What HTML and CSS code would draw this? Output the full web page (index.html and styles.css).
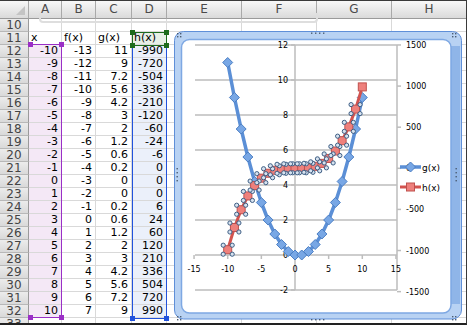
FILE: index.html
```html
<!DOCTYPE html>
<html lang="en">
<head>
  <meta charset="UTF-8">
  <title>Sheet1</title>
  <link rel="stylesheet" href="styles.css">
</head>
<body>
  <div class="window">
    <div class="sheet" id="sheet">
      <div class="ch corner"></div>
      <div class="ch">A</div>
      <div class="ch">B</div>
      <div class="ch">C</div>
      <div class="ch">D</div>
      <div class="ch">E</div>
      <div class="ch">F</div>
      <div class="ch">G</div>
      <div class="ch">H</div>
    </div>

    <div class="old-shape"></div>

    <div class="sel sel-a">
      <i class="knob tl"></i><i class="knob tr"></i><i class="knob bl"></i><i class="knob br"></i>
    </div>
    <div class="sel sel-d">
      <i class="knob tl"></i><i class="knob tr"></i><i class="knob bl"></i><i class="knob br"></i>
    </div>
    <div class="sel sel-h">
      <i class="knob tl"></i><i class="knob tr"></i><i class="knob bl"></i><i class="knob br"></i>
    </div>

    <svg class="chart" id="chart" width="289" height="291" viewBox="174 31 289 291">
      <rect class="frame" x="174.5" y="31.5" width="287" height="287.5" rx="9"/>
      <rect class="frame-side" x="451" y="46" width="9" height="258"/>
      <rect class="plot" x="181.5" y="39.5" width="269.5" height="273.5" rx="8"/>
      <g id="grid"></g>
      <g id="series"></g>
      <g id="legend"></g>
      <g id="dots"></g>
    </svg>
  </div>

  <script>
    const xs = [];
    for (let x = -10; x <= 10; x++) xs.push(x);
    const g = [11, 9, 7.2, 5.6, 4.2, 3, 2, 1.2, 0.6, 0.2, 0, 0, 0.2, 0.6, 1.2, 2, 3, 4.2, 5.6, 7.2, 9];
    const h = xs.map(x => x * x * x - x);

    // spreadsheet rows 10..33
    const sheet = document.getElementById("sheet");
    function addRow(num, cells) {
      let html = `<div class="rh">${num}</div>`;
      const cls = ["ca", "", "", "cd"];
      for (let i = 0; i < 8; i++) {
        let c = "c";
        if (cells && i < 4) {
          c += " " + cls[i];
          if (typeof cells[i] === "string") c += " t";
        }
        if (num === 11 && i === 3) c = "c t cg";
        if (num === 11 && i === 0) c = "c t";
        const txt = cells && i < 4 ? cells[i] : "";
        html += `<div class="${c}">${txt}</div>`;
      }
      sheet.insertAdjacentHTML("beforeend", html);
    }
    addRow(10, null);
    addRow(11, ["x", "f(x)", "g(x)", "h(x)"]);
    xs.forEach((x, i) => addRow(12 + i, [x, x - 3, g[i], h[i]]));
    addRow(33, null);

    // chart
    const NS = "http://www.w3.org/2000/svg";
    function el(parent, tag, attrs, text) {
      const e = document.createElementNS(NS, tag);
      for (const k in attrs) e.setAttribute(k, attrs[k]);
      if (text !== undefined) e.textContent = text;
      document.getElementById(parent).appendChild(e);
      return e;
    }
    const px = x => 295 + x * 6.73;
    const py = v => 255 - v * 17.5;
    const py2 = v => 168.3 - v * 0.08222;

    for (let v = 12; v >= -2; v -= 2) {
      el("grid", "line", { x1: 195, x2: 397, y1: py(v), y2: py(v), class: "gl" });
      el("grid", "line", { x1: 291, x2: 295, y1: py(v), y2: py(v), class: "gl" });
      el("grid", "text", { x: 288, y: py(v) + 3, class: "lbl", "text-anchor": "end" }, v);
    }
    el("grid", "line", { x1: 295, x2: 295, y1: py(12), y2: py(-2), class: "gl" });
    el("grid", "line", { x1: 397, x2: 397, y1: py(12), y2: py(-2), class: "gl" });
    for (let v = -15; v <= 15; v += 5) {
      el("grid", "line", { x1: px(v), x2: px(v), y1: 255, y2: 259, class: "gl" });
      el("grid", "text", { x: px(v), y: 272, class: "lbl", "text-anchor": "middle" }, v);
    }
    for (let v = 1500; v >= -1500; v -= 500) {
      el("grid", "line", { x1: 397, x2: 401, y1: py2(v), y2: py2(v), class: "gl" });
      el("grid", "text", { x: 406, y: py2(v) + 3, class: "lbl" }, v);
    }

    const gp = xs.map((x, i) => [px(x), py(g[i])]);
    const hp = xs.map((x, i) => [px(x), py2(h[i])]);
    el("series", "polyline", { points: gp.map(p => p.join(",")).join(" "), class: "line-g" });
    function diamond(parent, x, y) {
      el(parent, "polygon", { points: `${x},${y - 5} ${x + 5},${y} ${x},${y + 5} ${x - 5},${y}`, class: "mk-g" });
    }
    gp.forEach(p => diamond("series", p[0], p[1]));
    el("series", "polyline", { points: hp.map(p => p.join(",")).join(" "), class: "line-h" });
    hp.forEach((p, i) => {
      el("series", "rect", { x: p[0] - 4, y: p[1] - 4, width: 8, height: 8, class: "mk-h" });
    });
    hp.forEach((p, i) => {
      if (i === hp.length - 1) return;
      [[-4.5, -4.5], [4.5, -4.5], [-4.5, 4.5], [4.5, 4.5]].forEach(d => {
        el("series", "circle", { cx: p[0] + d[0], cy: p[1] + d[1], r: 2.1, class: "hd" });
      });
    });

    // legend
    el("legend", "line", { x1: 400, x2: 421, y1: 167, y2: 167, class: "line-g" });
    diamond("legend", 410.5, 167);
    el("legend", "text", { x: 422, y: 170.5, class: "lg" }, "g(x)");
    el("legend", "line", { x1: 400, x2: 421, y1: 187, y2: 187, class: "line-h" });
    el("legend", "rect", { x: 406.5, y: 183, width: 8, height: 8, class: "mk-h" });
    el("legend", "text", { x: 422, y: 190.5, class: "lg" }, "h(x)");

    // frame handle dots
    const dots = [];
    [[177, 33], [452, 33], [177, 316], [452, 316]].forEach(([x, y]) => {
      dots.push([x, y], [x + 3, y], [x, y + 3], [x + 3, y + 3]);
    });
    for (let i = 0; i < 4; i++) {
      dots.push([311 + i * 4, 32.5], [311 + i * 4, 319]);
      dots.push([176.5, 168 + i * 4], [455.5, 168 + i * 4]);
    }
    dots.forEach(([x, y]) => el("dots", "rect", { x: x, y: y, width: 1.4, height: 1.4, class: "dot" }));
  </script>
</body>
</html>
```

FILE: styles.css
```css
* {
  box-sizing: border-box;
}

body {
  margin: 0;
  background: #fff;
  font-family: "DejaVu Sans", Verdana, sans-serif;
}

.window {
  position: relative;
  width: 467px;
  height: 325px;
  overflow: hidden;
  border-top: 1px solid #3a3a3a;
  border-right: 1px solid #3a3a3a;
  border-bottom: 2px solid #222;
}

.sheet {
  display: grid;
  grid-template-columns: 29px 33px 34px 36px 35px 75px 75px 75px 75px;
  grid-template-rows: 18px;
  grid-auto-rows: 13px;
}

.ch {
  background: linear-gradient(#f8f8f8, #dadada);
  border-right: 1px solid #a9a9a9;
  border-bottom: 1px solid #9a9a9a;
  text-align: center;
  font-size: 12px;
  line-height: 17px;
  color: #4a4a4a;
}

.corner {
  position: relative;
}

.corner::after {
  content: "";
  position: absolute;
  right: 3px;
  bottom: 3px;
  border-style: solid;
  border-width: 0 0 9px 9px;
  border-color: transparent transparent #c4c4c4 transparent;
}

.rh {
  background: linear-gradient(#ececec, #d9d9d9);
  border-right: 1px solid #9a9a9a;
  border-bottom: 1px solid #b8b8b8;
  text-align: center;
  font-size: 12px;
  line-height: 12px;
  color: #444;
}

.c {
  border-right: 1px solid #d9d9d9;
  border-bottom: 1px solid #d9d9d9;
  font-size: 11px;
  line-height: 12px;
  text-align: right;
  padding-right: 3px;
  white-space: nowrap;
  overflow: hidden;
  color: #000;
}

.c.t {
  text-align: left;
  padding-left: 2px;
}

.ca {
  background: #f4e8f6;
}

.cd {
  background: #ebf0fa;
}

.cg {
  background: #e7efe7;
}

.old-shape {
  position: absolute;
  left: 39px;
  top: 12px;
  width: 279px;
  height: 10px;
  border: 2px solid #dedede;
  border-top: none;
  border-radius: 0 0 4px 4px;
}

.sel {
  position: absolute;
}

.sel-a {
  left: 29px;
  top: 43px;
  width: 33px;
  height: 274px;
  border: 1.5px solid #9a2fc6;
  border-left: none;
}

.sel-d {
  left: 132px;
  top: 44px;
  width: 35px;
  height: 274px;
  border: 1.5px solid #2152dc;
}

.sel-h {
  left: 132px;
  top: 31px;
  width: 35px;
  height: 14px;
  border: 1.5px solid #1d6b1d;
}

.knob {
  position: absolute;
  width: 5px;
  height: 5px;
}

.sel-a .knob { background: #9a2fc6; }
.sel-d .knob { background: #2152dc; }
.sel-h .knob { background: #1d6b1d; }

.knob.tl { left: -3px; top: -3px; }
.knob.tr { right: -3px; top: -3px; }
.knob.bl { left: -3px; bottom: -3px; }
.knob.br { right: -3px; bottom: -3px; }

.sel-a .knob.tl,
.sel-a .knob.bl { left: -1px; }

.chart {
  position: absolute;
  left: 174px;
  top: 30px;
}

.frame {
  fill: #b8d2f3;
  stroke: #5f8fd8;
  stroke-width: 1;
}

.frame-side {
  fill: #8fb5e8;
}

.plot {
  fill: #fff;
  stroke: #7ea8e3;
  stroke-width: 1.5;
}

.gl {
  stroke: #bdbdbd;
  stroke-width: 1.5;
}

.lbl, .lg {
  font-family: "DejaVu Sans", Verdana, sans-serif;
  font-size: 8px;
  fill: #000;
}

.lg {
  font-size: 9px;
}

.line-g {
  fill: none;
  stroke: #5b8fd6;
  stroke-width: 3.5;
  stroke-linejoin: round;
}

.mk-g {
  fill: #78a7e5;
  stroke: #4c7fc4;
  stroke-width: 1;
}

.line-h {
  fill: none;
  stroke: #d2534f;
  stroke-width: 3;
  stroke-linejoin: round;
}

.mk-h {
  fill: #ee807c;
  stroke: #c0504d;
  stroke-width: 1;
}

.hd {
  fill: #d6e2ef;
  stroke: #3e5e84;
  stroke-width: 1;
}

.dot {
  fill: #4b5d73;
}
```
